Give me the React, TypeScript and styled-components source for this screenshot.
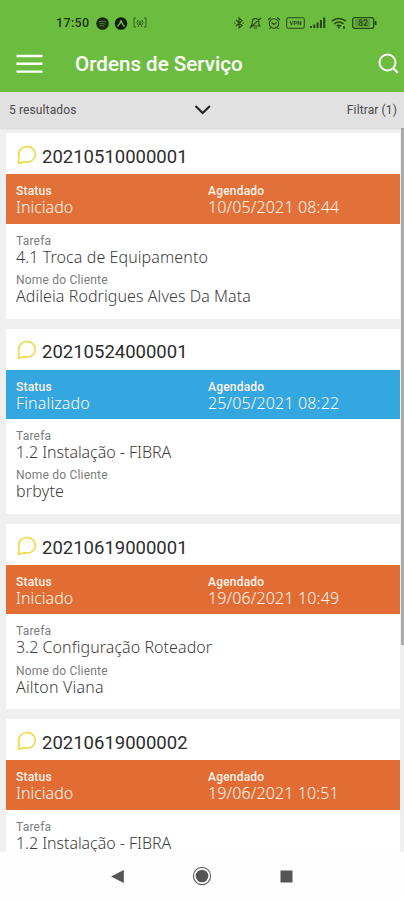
import React from "react";
import styled, { createGlobalStyle } from "styled-components";

const GlobalStyle = createGlobalStyle`
  * { box-sizing: border-box; }
  body { margin: 0; background: #fff; font-family: Roboto, sans-serif; }
`;

const Screen = styled.div`
  display: flex;
  flex-direction: column;
  width: 404px;
  height: 900px;
  overflow: hidden;
  background: #efefef;
`;

const Header = styled.header`
  flex: none;
  height: 92px;
  background: #6cbd3f;
`;

const StatusBar = styled.div`
  display: flex;
  align-items: center;
  height: 36px;
  padding: 10px 27px 0 56px;
  color: #1d3510;
`;

const Clock = styled.span`
  width: 39.5px;
  font: 500 12.5px/16px Roboto, sans-serif;
  letter-spacing: 0.35px;
`;

const StatusIcons = styled.div<{ $end?: boolean }>`
  display: flex;
  align-items: center;
  gap: 5px;
  margin-left: ${(p) => (p.$end ? "auto" : "0")};
  opacity: ${(p) => (p.$end ? 0.85 : 1)};
  svg { display: block; }
`;

const AppBar = styled.div`
  display: flex;
  align-items: center;
  height: 56px;
  padding: 0 5px 0 16px;
  color: #fff;
`;

const Title = styled.h1`
  flex: 1;
  margin: 0 0 0 32px;
  font: 500 20.6px/28px Roboto, sans-serif;
`;

const FilterBar = styled.div`
  position: relative;
  z-index: 1;
  flex: none;
  display: grid;
  grid-template-columns: 1fr 20px 1fr;
  align-items: center;
  height: 36px;
  padding: 0 7px 0 9px;
  background: #e1e1e1;
  box-shadow: 0 1px 2px rgba(0, 0, 0, 0.1);
  color: #4a4a4a;
  font-size: 12px;
  svg { display: block; }
`;

const FilterText = styled.span<{ $right?: boolean }>`
  margin-top: -1px;
  text-align: ${(p) => (p.$right ? "right" : "left")};
  letter-spacing: 0.12px;
`;

const Body = styled.main`
  flex: 1;
  min-height: 0;
  display: flex;
  overflow: hidden;
`;

const List = styled.div`
  display: flex;
  flex-direction: column;
  gap: 10px;
  width: 400px;
  padding: 5.3px 0 0 6px;
`;

const Card = styled.article`
  flex: none;
  height: 185.4px;
  background: #fff;
`;

const CardHead = styled.div`
  display: flex;
  align-items: center;
  gap: 5px;
  height: 41px;
  padding: 0 11px;
  svg { display: block; margin-top: 2px; }
`;

const OrderId = styled.span`
  margin-top: 6px;
  color: #2c2c2c;
  font-size: 18.5px;
  line-height: 24px;
`;

const Band = styled.div<{ $color: string }>`
  display: grid;
  grid-template-columns: 192px 1fr;
  height: 49.3px;
  padding: 9px 10px 0;
  background: ${(p) => p.$color};
  color: #fff;
`;

const Details = styled.div`
  display: flex;
  flex-direction: column;
  gap: 6.4px;
  padding: 9px 10px 0;
`;

const Field = styled.div`
  display: flex;
  flex-direction: column;
`;

const Label = styled.span<{ $light?: boolean }>`
  color: ${(p) => (p.$light ? "#fff3ea" : "#7c7c7c")};
  font-size: 12px;
  font-weight: ${(p) => (p.$light ? 500 : 400)};
  line-height: 16px;
  letter-spacing: 0.2px;
`;

const Value = styled.span<{ $light?: boolean; $track: number }>`
  margin-top: -1px;
  color: ${(p) => (p.$light ? "#fff8f2" : "#3c3c3c")};
  font: 300 16px/18px "Noto Sans", sans-serif;
  letter-spacing: ${(p) => p.$track}px;
  white-space: nowrap;
`;

const ScrollTrack = styled.div`
  width: 4px;
  padding-left: 1px;
`;

const ScrollThumb = styled.div`
  height: 517px;
  background: #aaa;
`;

const NavBar = styled.nav`
  flex: none;
  display: flex;
  align-items: center;
  justify-content: space-between;
  height: 48px;
  padding: 0 110px;
  background: #fefefe;
  svg { display: block; }
`;

type Order = {
  id: string;
  status: string;
  date: string;
  color: string;
  task: string;
  client: string;
  tracks: [number, number, number, number];
};

const orders: Order[] = [
  { id: "20210510000001", status: "Iniciado", date: "10/05/2021 08:44", color: "#e17139", task: "4.1 Troca de Equipamento", client: "Adileia Rodrigues Alves Da Mata", tracks: [0, 0.15, 0.09, 0.08] },
  { id: "20210524000001", status: "Finalizado", date: "25/05/2021 08:22", color: "#35a7e0", task: "1.2 Instalação - FIBRA", client: "brbyte", tracks: [0.15, 0.15, -0.05, 0.2] },
  { id: "20210619000001", status: "Iniciado", date: "19/06/2021 10:49", color: "#e16d34", task: "3.2 Configuração Roteador", client: "Ailton Viana", tracks: [0, 0.15, 0.06, 0.18] },
  { id: "20210619000002", status: "Iniciado", date: "19/06/2021 10:51", color: "#e16d34", task: "1.2 Instalação - FIBRA", client: "", tracks: [0, 0.13, -0.05, 0] },
];

const ChatIcon = () => (
  <svg width="20" height="20" viewBox="0 0 20 20" fill="none" stroke="#f1d84b" strokeWidth="1.7" strokeLinejoin="round">
    <path d="M1.4 18.2 2.3 13.2C.9 9.2 2 5.2 5 3.1 8.3.8 13.2 1 16 3.8c3 3 3.1 7.5.5 10.5-2.3 2.6-5.6 3.3-8.7 2.5z" />
  </svg>
);

const LeftStatusIcons = () => (
  <StatusIcons>
    <svg width="13" height="13" viewBox="0 0 13 13">
      <circle cx="6.5" cy="6.5" r="6.3" fill="#18290e" />
      <path d="M3 4.6q3.8-1.2 7 .5M3.4 6.8q3.1-.9 5.9.5M3.8 8.8q2.5-.7 4.6.4" fill="none" stroke="#4f8a2e" />
    </svg>
    <svg width="14" height="13" viewBox="0 0 14 13">
      <circle cx="7" cy="6.5" r="6.3" fill="#111d0b" />
      <path d="M3.5 9.5Q6 7.5 7 3.5q1 4 3.5 6" fill="none" stroke="#6cbd3f" strokeWidth="1.5" />
    </svg>
    <svg width="14" height="12" viewBox="0 0 14 12" fill="none" stroke="#315c1b" strokeWidth="1">
      <path d="M3 1H1v9h2M11 1h2v9h-2M5 3q-2 2.5 0 5M9 3q2 2.5 0 5M5 10l2-4 2 4" />
      <circle cx="7" cy="5" r="1" />
    </svg>
  </StatusIcons>
);

const RightStatusIcons = () => (
  <StatusIcons $end>
    <svg width="10" height="14" viewBox="0 0 10 14" fill="none" stroke="currentColor" strokeWidth="1.1">
      <path d="m2 4 6 5.5L5 12V2l3 2.5L2 10M0 7h1.5M8.5 7H10" />
    </svg>
    <svg width="13" height="14" viewBox="0 0 13 14" fill="none" stroke="currentColor" strokeWidth="1.1">
      <path d="M2 10h9L9.8 8V5.5Q9.5 2.5 6.5 2.5T3.2 5.5V8zM5 12h3M1 12 12 2" />
    </svg>
    <svg width="14" height="14" viewBox="0 0 14 14" fill="none" stroke="currentColor" strokeWidth="1.1">
      <circle cx="7" cy="7.5" r="4.7" />
      <path d="M4.5 6.5 7 8.5l2.5-2M1 4l3-2.5M13 4l-3-2.5M3.5 11.5 2.5 13M10.5 11.5l1 1.5" />
    </svg>
    <svg width="19" height="12" viewBox="0 0 19 12" fill="none" stroke="currentColor">
      <rect x=".7" y=".7" width="17.6" height="10.6" rx="1.5" />
      <text x="9.5" y="8.3" textAnchor="middle" fill="currentColor" stroke="none" fontSize="6" fontWeight="700" fontFamily="Roboto">VPN</text>
    </svg>
    <svg width="16" height="12" viewBox="0 0 16 12" fill="currentColor">
      <path d="M0 9h2v2H0zM3.3 7.5h2V11h-2zM6.6 5.5h2V11h-2zM9.9 3h2v8h-2zM13.2.5h2V11h-2z" />
    </svg>
    <svg width="16" height="13" viewBox="0 0 16 13" fill="none" stroke="currentColor" strokeWidth="1.6">
      <path d="M.8 4.2q7-5.5 14.2 0M3.3 6.8q4.6-3.6 9.2 0M5.7 9q2.3-1.6 4.5 0" />
      <path d="M7.9 9.2v2.3M13 9v3" />
    </svg>
    <svg width="25" height="12" viewBox="0 0 25 12" fill="none" stroke="currentColor" strokeWidth="1.3">
      <rect x=".7" y=".7" width="21" height="10.6" rx="2" />
      <path d="M23.5 4v4" strokeWidth="2" />
      <rect x="3" y="2.5" width="15" height="7" fill="currentColor" fillOpacity=".3" stroke="none" />
      <text x="11.2" y="9" textAnchor="middle" fill="currentColor" stroke="none" fontSize="8.5" fontWeight="500" fontFamily="Roboto">82</text>
    </svg>
  </StatusIcons>
);

function OrderCard({ order }: { order: Order }) {
  return (
    <Card>
      <CardHead>
        <ChatIcon />
        <OrderId>{order.id}</OrderId>
      </CardHead>
      <Band $color={order.color}>
        <Field>
          <Label $light>Status</Label>
          <Value $light $track={order.tracks[0]}>{order.status}</Value>
        </Field>
        <Field>
          <Label $light>Agendado</Label>
          <Value $light $track={order.tracks[1]}>{order.date}</Value>
        </Field>
      </Band>
      <Details>
        <Field>
          <Label>Tarefa</Label>
          <Value $track={order.tracks[2]}>{order.task}</Value>
        </Field>
        {order.client && (
          <Field>
            <Label>Nome do Cliente</Label>
            <Value $track={order.tracks[3]}>{order.client}</Value>
          </Field>
        )}
      </Details>
    </Card>
  );
}

export default function App() {
  return (
    <>
      <GlobalStyle />
      <Screen>
        <Header>
          <StatusBar>
            <Clock>17:50</Clock>
            <LeftStatusIcons />
            <RightStatusIcons />
          </StatusBar>
          <AppBar>
            <svg width="27" height="20" viewBox="0 0 27 20" stroke="#fff" strokeWidth="2.4">
              <path d="M.5 2h26M.5 9.8h26M.5 17.6h26" />
            </svg>
            <Title>Ordens de Serviço</Title>
            <svg width="21" height="22" viewBox="0 0 21 22" fill="none" stroke="#fff" strokeWidth="2">
              <circle cx="9.5" cy="9.5" r="8" />
              <path d="m15.2 15.2 4.6 4.6" />
            </svg>
          </AppBar>
        </Header>
        <FilterBar>
          <FilterText>5 resultados</FilterText>
          <svg width="20" height="12" viewBox="0 0 20 12" fill="none" stroke="#222" strokeWidth="2.1">
            <path d="m2.5 2 7.2 7 7.2-7" />
          </svg>
          <FilterText $right>Filtrar (1)</FilterText>
        </FilterBar>
        <Body>
          <List>
            {orders.map((o) => (
              <OrderCard key={o.id} order={o} />
            ))}
          </List>
          <ScrollTrack>
            <ScrollThumb />
          </ScrollTrack>
        </Body>
        <NavBar>
          <svg width="15" height="15" viewBox="0 0 15 15"><path d="M1 7.5 13.8 1v13z" fill="#555" /></svg>
          <svg width="20" height="20" viewBox="0 0 20 20">
            <circle cx="10" cy="10" r="8.6" fill="none" stroke="#666" strokeWidth="1.2" />
            <circle cx="10" cy="10" r="6.3" fill="#555" />
          </svg>
          <svg width="15" height="15" viewBox="0 0 15 15"><path d="M1.5 1.5h12v12h-12z" fill="#555" /></svg>
        </NavBar>
      </Screen>
    </>
  );
}
